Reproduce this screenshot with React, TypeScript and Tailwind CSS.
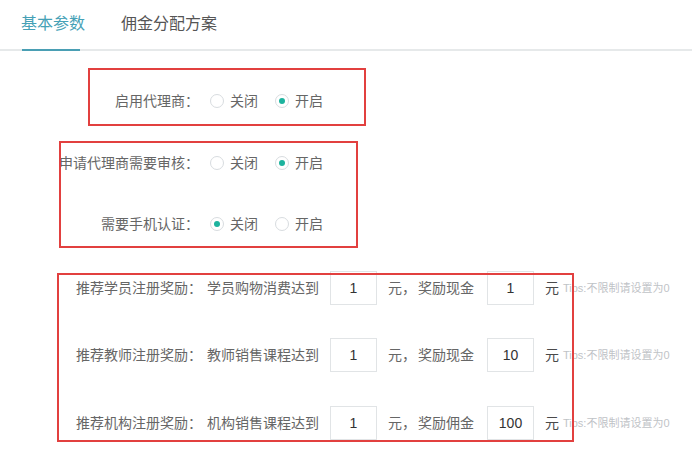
import React from "react";

const font = {
  fontFamily: '"Liberation Sans", "Noto Sans CJK SC", sans-serif',
};

function Radio({ checked, label }: { checked?: boolean; label: string }) {
  return (
    <label className="flex items-center mr-[17px] text-[14px] text-[#666]">
      <span className="flex h-[14px] w-[14px] items-center justify-center rounded-full border border-[#d8dcdf] bg-white">
        {checked && <span className="h-[6px] w-[6px] rounded-full bg-[#1db39e]" />}
      </span>
      <span className="ml-[6px]">{label}</span>
    </label>
  );
}

function RadioRow({ label, on, className }: { label: string; on: boolean; className: string }) {
  return (
    <div className={`flex h-[34px] items-center ${className}`}>
      <span className="w-[199px] text-right text-[14px] text-[#666]">{label}</span>
      <div className="ml-[11px] flex items-center">
        <Radio label="关闭" checked={!on} />
        <Radio label="开启" checked={on} />
      </div>
    </div>
  );
}

function Box({ value }: { value: string }) {
  return (
    <div className="flex h-[34px] w-[47px] items-center justify-center border border-[#e1e4e6] text-[14px] text-[#333]">
      {value}
    </div>
  );
}

function RewardRow({
  label,
  cond,
  kind,
  min,
  reward,
  className,
}: {
  label: string;
  cond: string;
  kind: string;
  min: string;
  reward: string;
  className: string;
}) {
  return (
    <div className={`flex h-[34px] items-center text-[14px] text-[#666] ${className}`}>
      <span className="w-[202px] text-right">{label}</span>
      <span className="ml-[5px] w-[123px]">{cond}</span>
      <Box value={min} />
      <span className="ml-[11px]">元，</span>
      <span className="ml-[2px] w-[69px]">{kind}</span>
      <Box value={reward} />
      <span className="ml-[11px] text-[#4a4a4a]">元</span>
      <span className="ml-[4px] text-[11px] text-[#bfc3c7]">Tips:不限制请设置为0</span>
    </div>
  );
}

export default function App() {
  return (
    <div className="relative h-[454px] w-[692px] overflow-hidden bg-white" style={font}>
      {/* Tabs */}
      <div className="flex h-[51px] items-stretch border-b-2 border-[#e6e9ea] pl-[21px]">
        <div className="relative flex items-center pb-[1px] text-[16px] text-[#46a1b6]">
          基本参数
          <span className="absolute -bottom-[2px] left-[1px] h-[2px] w-[58px] bg-[#4a9fb4]" />
        </div>
        <div className="ml-[36px] flex items-center pb-[1px] text-[16px] text-[#555]">佣金分配方案</div>
      </div>

      {/* Form */}
      <div className="flex flex-col">
        <RadioRow label="启用代理商：" on className="mt-[33px]" />
        <RadioRow label="申请代理商需要审核：" on className="mt-[28px]" />
        <RadioRow label="需要手机认证：" on={false} className="mt-[27px]" />
        <RewardRow
          label="推荐学员注册奖励："
          cond="学员购物消费达到"
          kind="奖励现金"
          min="1"
          reward="1"
          className="mt-[30px]"
        />
        <RewardRow
          label="推荐教师注册奖励："
          cond="教师销售课程达到"
          kind="奖励现金"
          min="1"
          reward="10"
          className="mt-[33px]"
        />
        <RewardRow
          label="推荐机构注册奖励："
          cond="机构销售课程达到"
          kind="奖励佣金"
          min="1"
          reward="100"
          className="mt-[34px]"
        />
      </div>

      {/* Red annotation boxes */}
      <div className="pointer-events-none absolute left-[88px] top-[68px] h-[58px] w-[278px] border-2 border-[#e2403f]" />
      <div className="pointer-events-none absolute left-[59px] top-[141px] h-[107px] w-[299px] border-2 border-[#e2403f]" />
      <div className="pointer-events-none absolute left-[57px] top-[273px] h-[169px] w-[517px] border-2 border-[#e2403f]" />
    </div>
  );
}
